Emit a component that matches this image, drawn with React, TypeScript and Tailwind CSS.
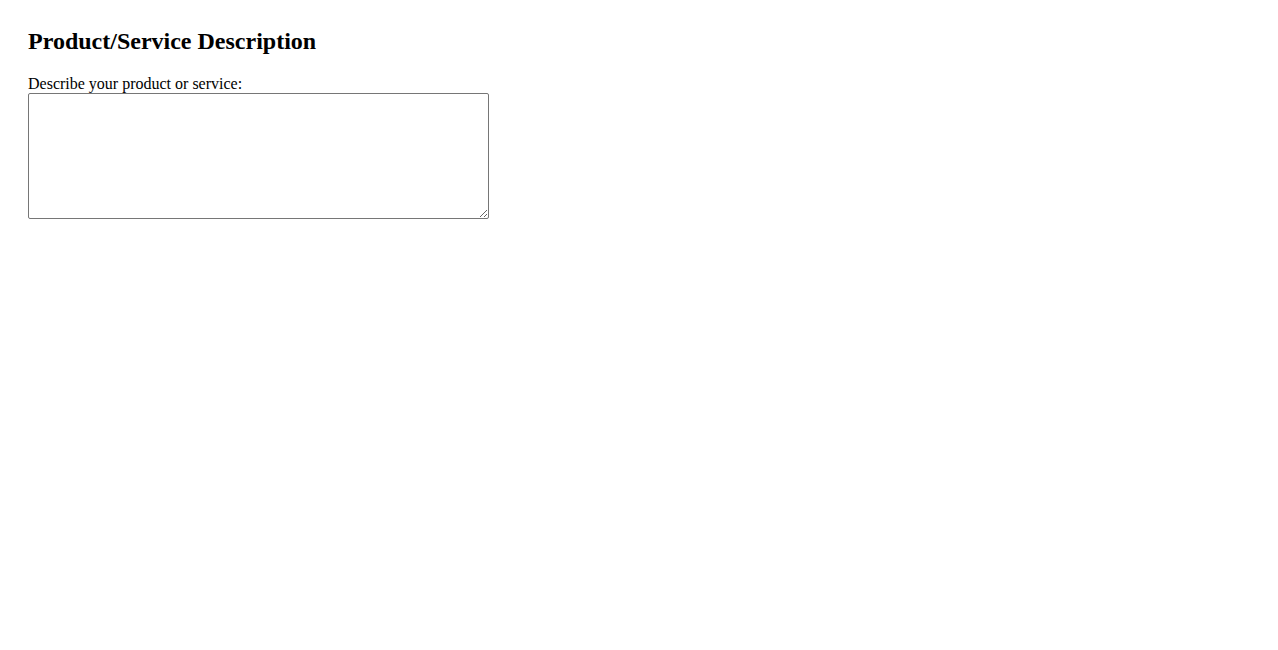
import React from "react";

export default function App() {
  return (
    <div className="min-h-[650px] bg-white pt-[28px] pl-[28px] text-black font-['Liberation_Serif','Times_New_Roman',serif]">
      <h2 className="text-[24px] font-bold leading-[normal] mb-[20px]">
        Product/Service Description
      </h2>
      <label htmlFor="desc" className="block text-[16px] leading-[normal]">
        Describe your product or service:
      </label>
      <textarea
        id="desc"
        className="block w-[461px] h-[126px] border border-[#767676] rounded-[2px] bg-white p-[2px] text-[13px] resize font-['Liberation_Mono',monospace]"
      />
    </div>
  );
}
